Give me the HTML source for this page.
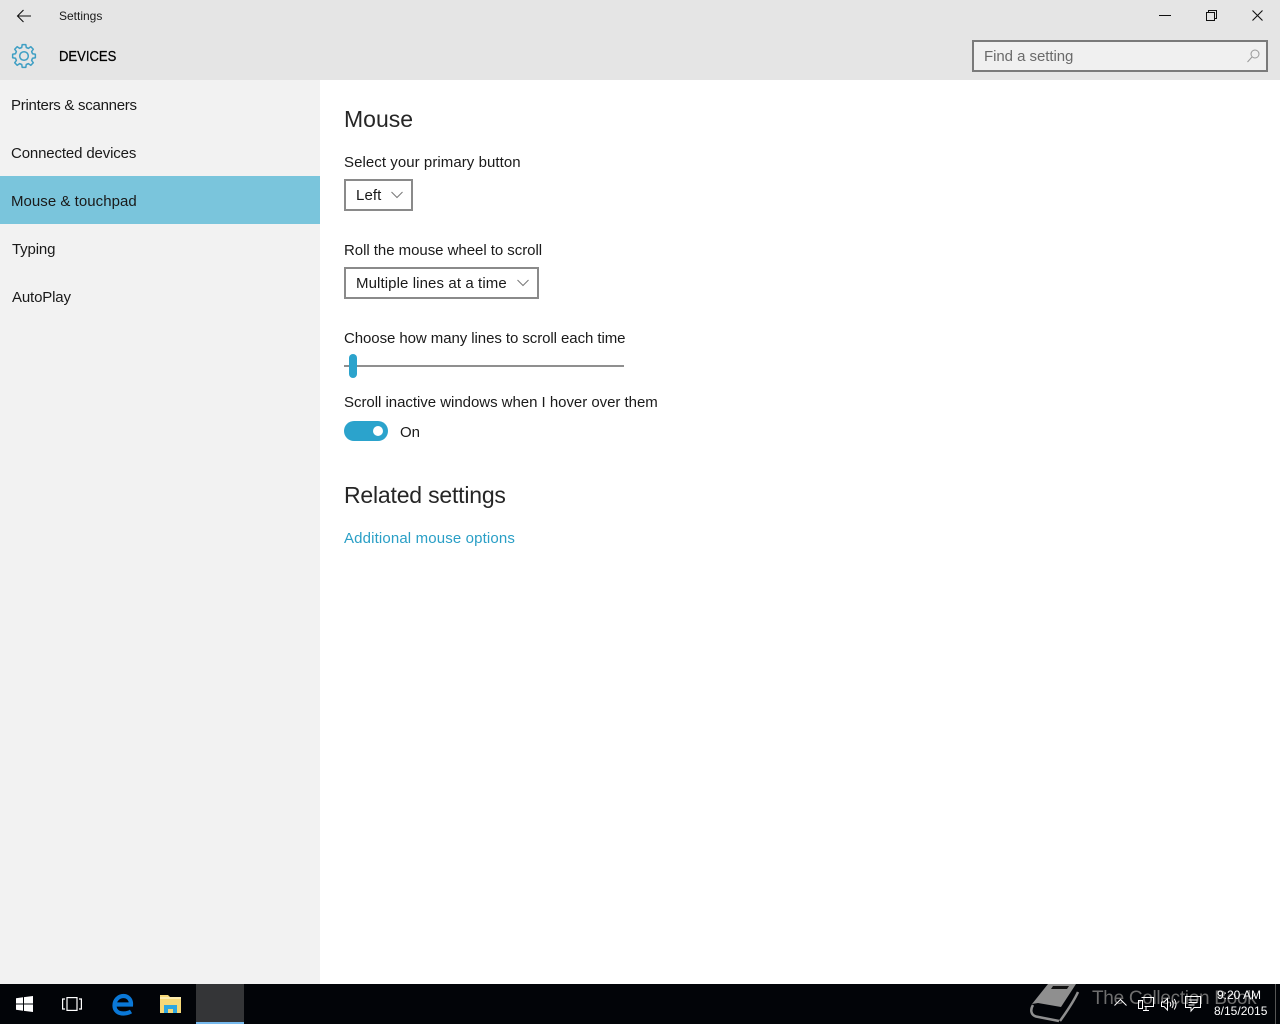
<!DOCTYPE html>
<html lang="en">
<head>
<meta charset="utf-8">
<title>Settings</title>
<style>
html,body{margin:0;padding:0;width:1280px;height:1024px;overflow:hidden;background:#fff;font-family:"Liberation Sans",sans-serif;color:#1a1a1a}
.a{position:absolute;white-space:nowrap;line-height:20px}
svg{position:absolute;overflow:visible}
#head{position:absolute;left:0;top:0;width:1280px;height:80px;background:#e5e5e5}
#side{position:absolute;left:0;top:80px;width:320px;height:904px;background:#f2f2f2}
#sel{position:absolute;left:0;top:176px;width:320px;height:48px;background:#7ac5dc}
#bar{position:absolute;left:0;top:984px;width:1280px;height:40px;background:#020408}
.n,.l{font-size:15px}
.dd{position:absolute;box-sizing:border-box;border:2px solid #8a8a8a;background:#fff;height:32px}
</style>
</head>
<body>
<div id="head"></div>
<div id="side"></div>
<div id="sel"></div>

<svg style="left:16px;top:8px" width="16" height="16" viewBox="0 0 16 16" fill="none" stroke="#111" stroke-width="1.1"><path d="M1.500 8H15M7.500 2L1.500 8L7.500 14"/></svg>
<div class="a" style="left:59px;top:6px;font-size:12px">Settings</div>
<svg style="left:12px;top:44px" width="24" height="24" viewBox="0 0 24 24" fill="none" stroke="#3f9fc4" stroke-width="1.500"><g transform="translate(12 12)"><polygon stroke-linejoin="round" points="-2.28,-8.5 -1.8,-11.36 1.8,-11.36 2.28,-8.5 4.4,-7.62 6.76,-9.3 9.3,-6.76 7.62,-4.4 8.5,-2.28 11.36,-1.8 11.36,1.8 8.5,2.28 7.62,4.4 9.3,6.76 6.76,9.3 4.4,7.62 2.28,8.5 1.8,11.36 -1.8,11.36 -2.28,8.5 -4.4,7.62 -6.76,9.3 -9.3,6.76 -7.62,4.4 -8.5,2.28 -11.36,1.8 -11.36,-1.8 -8.5,-2.28 -7.62,-4.4 -9.3,-6.76 -6.76,-9.3 -4.4,-7.62"/><circle r="4.300"/></g></svg>
<div class="a" style="left:59px;top:47px;font-size:14.500px;color:#000;-webkit-text-stroke:.25px #000;transform:scaleX(.9);transform-origin:0 50%">DEVICES</div>

<svg style="left:1159px;top:15px" width="12" height="2"><rect width="12" height="1" fill="#111"/></svg>
<svg style="left:1206px;top:10px" width="11" height="11" viewBox="0 0 11 11" fill="none" stroke="#111"><path d="M.5 2.500h8v8h-8zM2.500 2.500V.5h8v8h-2"/></svg>
<svg style="left:1252px;top:10px" width="11" height="11" viewBox="0 0 11 11" fill="none" stroke="#111" stroke-width="1.100"><path d="M.5.5l10 10M10.500.5l-10 10"/></svg>

<div style="position:absolute;left:972px;top:40px;width:296px;height:32px;box-sizing:border-box;border:2px solid #7a7a7a;background:#f0f0f0"></div>
<div class="a" style="left:984px;top:47px;font-size:15px;color:#6a6a6a;letter-spacing:-.05px">Find a setting</div>
<svg style="left:1247px;top:49px" width="13" height="14" viewBox="0 0 13 14" fill="none" stroke="#999"><circle cx="8" cy="5" r="4"/><path d="M5 8l-4.500 5"/></svg>

<div class="a n" style="left:11px;top:96px;letter-spacing:-.27px">Printers &amp; scanners</div>
<div class="a n" style="left:11px;top:144px;letter-spacing:-.14px">Connected devices</div>
<div class="a n" style="left:11px;top:192px;letter-spacing:.04px">Mouse &amp; touchpad</div>
<div class="a n" style="left:12px;top:240px;letter-spacing:-.15px">Typing</div>
<div class="a n" style="left:12px;top:288px;letter-spacing:-.15px">AutoPlay</div>

<div class="a" style="left:344px;top:106px;font-size:23px;line-height:26px;color:#262626">Mouse</div>
<div class="a l" style="left:344px;top:153px;letter-spacing:.06px">Select your primary button</div>
<div class="dd" style="left:344px;top:179px;width:69px"></div>
<div class="a l" style="left:356px;top:186px;letter-spacing:.1px">Left</div>
<svg style="left:391px;top:191px" width="12" height="8" viewBox="0 0 12 8" fill="none" stroke="#777"><path d="M.5 1l5.500 5.500L11.500 1"/></svg>

<div class="a l" style="left:344px;top:241px;letter-spacing:-.04px">Roll the mouse wheel to scroll</div>
<div class="dd" style="left:344px;top:267px;width:195px"></div>
<div class="a l" style="left:356px;top:274px;letter-spacing:.1px">Multiple lines at a time</div>
<svg style="left:517px;top:279px" width="12" height="8" viewBox="0 0 12 8" fill="none" stroke="#777"><path d="M.5 1l5.500 5.500L11.500 1"/></svg>

<div class="a l" style="left:344px;top:329px;letter-spacing:-.07px">Choose how many lines to scroll each time</div>
<div style="position:absolute;left:344px;top:365px;width:280px;height:2px;background:#8f8f8f"></div>
<div style="position:absolute;left:349px;top:354px;width:8px;height:24px;border-radius:4px;background:#2ba3cc"></div>

<div class="a l" style="left:344px;top:393px;letter-spacing:-.03px">Scroll inactive windows when I hover over them</div>
<div style="position:absolute;left:344px;top:421px;width:44px;height:20px;border-radius:10px;background:#2ba3cc"></div>
<div style="position:absolute;left:373px;top:426px;width:10px;height:10px;border-radius:5px;background:#fff"></div>
<div class="a l" style="left:400px;top:423px">On</div>

<div class="a" style="left:344px;top:482px;font-size:23px;line-height:26px;letter-spacing:-.2px;color:#262626">Related settings</div>
<div class="a l" style="left:344px;top:529px;color:#2a9fc6;letter-spacing:.14px">Additional mouse options</div>

<div id="bar"></div>
<svg style="left:16px;top:996px" width="17" height="16" viewBox="0 0 17 16" fill="#fff"><path d="M0 2.300L7 1.300V7.500H0zM8 1.100L17 0V7.500H8zM0 8.500H7V14.700L0 13.700zM8 8.500H17V16L8 14.900z"/></svg>
<svg style="left:62px;top:997px" width="20" height="14" viewBox="0 0 20 14" fill="none" stroke="#fff" stroke-width="1.200"><rect x="5" y=".6" width="10" height="12.800"/><path d="M3 2H.6v10H3M17 2h2.400v10H17"/></svg>
<svg style="left:112px;top:992px" width="22" height="24" viewBox="0 0 22 24" fill="none" stroke="#0a78d7" stroke-width="4.200"><path d="M3 12.500h16c.3-5-3-8.500-7.500-8.500C6.500 4 2.500 8 2.500 13.500S6.500 21.500 11.500 21.500c3 0 5.500-.8 7.500-2"/></svg>
<svg style="left:160px;top:994px" width="22" height="20" viewBox="0 0 22 20"><path d="M0 1h8l2 2h11v16H0z" fill="#f6d877"/><path d="M0 3h21v2H0z" fill="#fcecb0"/><path d="M4 19v-8h13v8h-4v-4H8v4z" fill="#2ea7e0"/></svg>
<div style="position:absolute;left:196px;top:984px;width:48px;height:38px;background:#343537"></div>
<div style="position:absolute;left:196px;top:1022px;width:48px;height:2px;background:#76b9ed"></div>

<svg style="left:1030px;top:984px" width="52" height="38" viewBox="0 0 52 38" fill="none" stroke="#8f8f8f" stroke-width="2.500">
<polygon points="18,0 46,0 31,23 8,19 2,20" fill="#8f8f8f" stroke="none"/>
<polygon points="23,2 39,2 37,5 21,5" fill="#111" stroke="none"/>
<path d="M3 21C0 26 1 31 6 32.500L29 37"/>
<path d="M30 37C35 30 43 19 48 8"/>
</svg>
<div class="a" style="left:1092px;top:989px;font-size:19px;color:#6e6e6e;letter-spacing:-.3px">The Collection Book</div>

<svg style="left:1114px;top:998px" width="13" height="8" viewBox="0 0 13 8" fill="none" stroke="#fff"><path d="M.5 7.500l6-6 6 6"/></svg>
<svg style="left:1137px;top:997px" width="17" height="15" viewBox="0 0 17 15" fill="none" stroke="#fff"><path d="M4.500.5h12v9h-9M6 13.500h6M9 10v3.500"/><path d="M1.500 3.500h4v8h-4z"/></svg>
<svg style="left:1161px;top:997px" width="16" height="15" viewBox="0 0 16 15" fill="none" stroke="#fff"><path d="M.5 5h2.500L6.500 1.500v11.500L3 9.500H.5zM9 5c1 1.500 1 3 0 4.500M11 3.500c1.600 2.500 1.600 5 0 7.500M13.300 2c2.200 3.400 2.200 7.200 0 10.500"/></svg>
<svg style="left:1185px;top:996px" width="16" height="17" viewBox="0 0 16 17" fill="none" stroke="#fff"><path d="M.5.5h15v11H9L6 15v-3.500H.5zM3.500 4h9M3.500 6.500h9M3.500 9h6"/></svg>
<div class="a" style="left:1217px;top:987px;font-size:12px;color:#fff;line-height:16px">9:20 AM</div>
<div class="a" style="left:1214px;top:1003px;font-size:12px;color:#fff;line-height:16px">8/15/2015</div>
<div style="position:absolute;left:1275px;top:984px;width:1px;height:40px;background:#555"></div>
</body>
</html>
